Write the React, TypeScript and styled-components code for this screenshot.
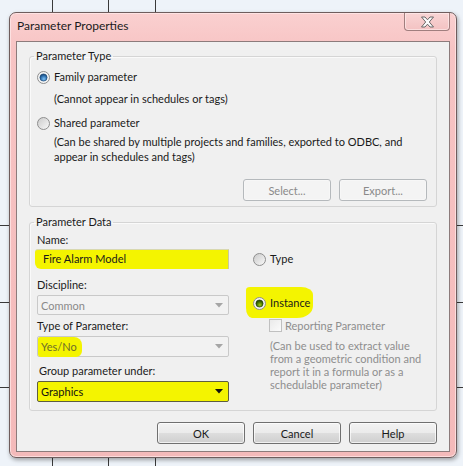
import React from "react";
import styled, { createGlobalStyle } from "styled-components";

const Global = createGlobalStyle`
  html, body { margin: 0; padding: 0; background: #eef3f9; }
  body { font-family: Lato, "Noto Sans", sans-serif; font-size: 11px; color: #1a1a1a; }
  * { box-sizing: border-box; }
`;

const Page = styled.div`
  position: relative;
  width: 463px;
  height: 466px;
  overflow: hidden;
  background: #eef3f9;
  padding: 12px 0 0 9px;
`;

const BgLines = styled.svg`
  position: absolute;
  left: 0;
  top: 0;
`;

const Window = styled.div`
  position: relative;
  width: 448px;
  height: 446px;
  border: 1px solid #6f5d5d;
  border-radius: 7px;
  background: linear-gradient(180deg, #fad0d0 0%, #f7c4c4 8%, #f4baba 100%);
  box-shadow: inset 0 0 0 1px rgba(255, 235, 235, 0.7), 1px 2px 4px rgba(0, 0, 0, 0.35);
  padding: 0 6px 5px 6px;
  display: flex;
  flex-direction: column;
`;

const TitleBar = styled.div`
  height: 28px;
  display: flex;
  justify-content: space-between;
  align-items: flex-start;
`;

const Title = styled.div`
  margin: 6px 0 0 1px;
  font-size: 12px;
  line-height: 14px;
  color: #1b1b1b;
`;

const CloseBtn = styled.div`
  width: 46px;
  height: 18px;
  border: 1px solid #a07e7e;
  border-top: none;
  border-radius: 0 0 4px 4px;
  background: linear-gradient(180deg, #f9d5d5, #f3c2c2);
  box-shadow: inset 0 0 0 1px rgba(255, 240, 240, 0.6);
  display: flex;
  align-items: center;
  justify-content: center;
`;

const Client = styled.div`
  height: 411px;
  border: 1px solid #8c7b7b;
  background: #f0f0f0;
  padding: 7px 12px 0 12px;
  display: flex;
  flex-direction: column;
  white-space: nowrap;
`;

const Group = styled.fieldset<{ $mt?: number; $pb?: number }>`
  margin: ${(p) => p.$mt ?? 0}px 0 0 0;
  padding: 0 0 ${(p) => p.$pb ?? 5}px 0;
  border: 1px solid #d5d5d5;
  border-radius: 3px;
  box-shadow: inset 1px 1px 0 #fafafa;
  min-width: 0;
`;

const Legend = styled.legend`
  margin-left: 4px;
  padding: 0 2px;
  line-height: 14px;
  font-size: 11px;
`;

const RadioRow = styled.label<{ $mt: number; $pl?: number }>`
  display: flex;
  align-items: center;
  gap: 4px;
  height: 16px;
  margin-top: ${(p) => p.$mt}px;
  padding-left: ${(p) => p.$pl ?? 7}px;
  line-height: 16px;
`;

const Note = styled.div<{ $mt: number; $pl?: number; $lh?: number; $gray?: boolean }>`
  margin-top: ${(p) => p.$mt}px;
  padding-left: ${(p) => p.$pl ?? 24}px;
  line-height: ${(p) => p.$lh ?? 14}px;
  color: ${(p) => (p.$gray ? "#8e8e8e" : "#1a1a1a")};
`;

const ButtonRow = styled.div<{ $mt: number; $pr: number }>`
  display: flex;
  justify-content: flex-end;
  gap: 8px;
  margin-top: ${(p) => p.$mt}px;
  padding-right: ${(p) => p.$pr}px;
`;

const Button = styled.button<{ $disabled?: boolean }>`
  width: 88px;
  height: 22px;
  padding: 0;
  font-family: inherit;
  font-size: 11px;
  border-radius: 3px;
  border: 1px solid ${(p) => (p.$disabled ? "#b5b9bc" : "#707070")};
  color: ${(p) => (p.$disabled ? "#8a8a8a" : "#1a1a1a")};
  background: ${(p) =>
    p.$disabled
      ? "#f4f4f4"
      : "linear-gradient(180deg, #f3f3f3 0%, #ebebeb 48%, #dddddd 52%, #cfcfcf 100%)"};
  box-shadow: inset 0 0 0 1px ${(p) => (p.$disabled ? "#f7f7f7" : "rgba(255,255,255,0.7)")};
`;

const DataBody = styled.div`
  display: flex;
`;

const LeftCol = styled.div`
  width: 192px;
  margin-left: 7px;
  display: flex;
  flex-direction: column;
`;

const RightCol = styled.div`
  margin-left: 24px;
  display: flex;
  flex-direction: column;
`;

const FieldLabel = styled.div<{ $mt: number; $ml?: number }>`
  margin-top: ${(p) => p.$mt}px;
  margin-left: ${(p) => p.$ml ?? 0}px;
  line-height: 14px;
  height: 14px;
`;

const TextInput = styled.div`
  margin-top: 2px;
  height: 20px;
  margin-left: -2px;
  padding-left: 8px;
  background: #f4f400;
  border-radius: 3px 0 0 6px;
  border-top: 1px solid #d8d8b0;
  border-right: 1px solid #c8c8a0;
  line-height: 18px;
`;

const Select = styled.div<{ $mt: number; $h: number; $active?: boolean }>`
  margin-top: ${(p) => p.$mt}px;
  height: ${(p) => p.$h}px;
  border: 1px solid ${(p) => (p.$active ? "#5e5e40" : "#c9c9c9")};
  border-radius: 2px;
  background: ${(p) => (p.$active ? "#f4f400" : "#f2f2f2")};
  color: ${(p) => (p.$active ? "#111" : "#8a8a8a")};
  display: flex;
  align-items: center;
  justify-content: space-between;
  padding: 0 5px 0 3px;
`;

const Highlight = styled.span`
  background: #f4f400;
  padding: 3px 5px 3px 3px;
  margin: -3px -5px -3px -3px;
  border-radius: 2px 8px 6px 3px;
  color: #6d6d2a;
  line-height: 14px;
`;

const InstanceMark = styled.div`
  background: #f4f400;
  margin: 20px -3px -7px -7px;
  padding: 8px 3px 7px 7px;
  border-radius: 4px 12px 16px 6px / 3px 8px 12px 10px;
  width: fit-content;
`;

const CheckRow = styled.div`
  display: flex;
  align-items: center;
  gap: 3px;
  margin-top: 8px;
  padding-left: 16px;
  height: 13px;
  color: #8e8e8e;
`;

const CheckBox = styled.span`
  width: 13px;
  height: 13px;
  border: 1px solid #c0c0c0;
  background: linear-gradient(135deg, #eaeaea, #fbfbfb);
`;

function Radio({ checked, dot }: { checked?: boolean; dot?: "blue" | "green" }) {
  const id = `r-${checked ? dot : "off"}`;
  const c =
    dot === "green"
      ? ["#1f3d00", "#3f6e00", "#a0cc10"]
      : ["#123f6e", "#2e6fae", "#7fc2f5"];
  return (
    <svg width="13" height="13" viewBox="0 0 13 13">
      <defs>
        <linearGradient id={`${id}-bg`} x1="0" y1="0" x2="1" y2="1">
          <stop offset="0" stopColor="#c9c9c9" />
          <stop offset="1" stopColor="#fafafa" />
        </linearGradient>
        <radialGradient id={`${id}-dot`} cx="0.55" cy="0.7" r="0.7">
          <stop offset="0" stopColor={c[2]} />
          <stop offset="0.6" stopColor={c[1]} />
          <stop offset="1" stopColor={c[0]} />
        </radialGradient>
      </defs>
      <circle cx="6.5" cy="6.5" r="6" fill={checked ? "#f4f4f4" : `url(#${id}-bg)`} stroke="#8e8e8e" />
      {checked && <circle cx="6.5" cy="6.5" r="3.6" fill={`url(#${id}-dot)`} stroke={c[0]} strokeWidth="0.6" />}
    </svg>
  );
}

function Arrow({ color }: { color: string }) {
  return (
    <svg width="8" height="5" viewBox="0 0 8 5">
      <path d="M0 0 H8 L4 4.5 Z" fill={color} />
    </svg>
  );
}

export default function App() {
  return (
    <>
      <Global />
      <Page>
        <BgLines width="463" height="466">
          {[52, 108, 155].map((x) => (
            <line key={x} x1={x + 0.5} y1="0" x2={x + 0.5} y2="466" stroke="#3a3a3a" strokeWidth="1" />
          ))}
          {[225, 302, 387].map((y) => (
            <line key={y} x1="0" y1={y + 0.5} x2="463" y2={y + 0.5} stroke="#3a3a3a" strokeWidth="1" />
          ))}
        </BgLines>
        <Window>
          <TitleBar>
            <Title>Parameter Properties</Title>
            <CloseBtn>
              <svg width="15" height="12" viewBox="0 0 15 12">
                <path
                  d="M1.5 1 H5 L7.5 3.8 L10 1 H13.5 L9.3 6 L13.5 11 H10 L7.5 8.2 L5 11 H1.5 L5.7 6 Z"
                  fill="#fbfbfb"
                  stroke="#5a5a5a"
                  strokeWidth="0.9"
                  strokeLinejoin="round"
                />
              </svg>
            </CloseBtn>
          </TitleBar>
          <Client>
            <Group>
              <Legend>Parameter Type</Legend>
              <RadioRow $mt={6}>
                <Radio checked dot="blue" />
                Family parameter
              </RadioRow>
              <Note $mt={7}>(Cannot appear in schedules or tags)</Note>
              <RadioRow $mt={9}>
                <Radio />
                Shared parameter
              </RadioRow>
              <Note $mt={3} $lh={15}>
                (Can be shared by multiple projects and families, exported to ODBC, and
                <br />
                appear in schedules and tags)
              </Note>
              <ButtonRow $mt={15} $pr={9}>
                <Button $disabled>Select...</Button>
                <Button $disabled>Export...</Button>
              </ButtonRow>
            </Group>
            <Group $mt={8} $pb={8}>
              <Legend>Parameter Data</Legend>
              <DataBody>
                <LeftCol>
                  <FieldLabel $mt={4}>Name:</FieldLabel>
                  <TextInput>Fire Alarm Model</TextInput>
                  <FieldLabel $mt={9}>Discipline:</FieldLabel>
                  <Select $mt={3} $h={20}>
                    <span>Common</span>
                    <Arrow color="#a6a6a6" />
                  </Select>
                  <FieldLabel $mt={4}>Type of Parameter:</FieldLabel>
                  <Select $mt={3} $h={21}>
                    <Highlight>Yes/No</Highlight>
                    <Arrow color="#a6a6a6" />
                  </Select>
                  <FieldLabel $mt={7} $ml={2}>Group parameter under:</FieldLabel>
                  <Select $mt={3} $h={21} $active>
                    <span>Graphics</span>
                    <Arrow color="#111" />
                  </Select>
                </LeftCol>
                <RightCol>
                  <RadioRow $mt={22} $pl={0}>
                    <Radio />
                    Type
                  </RadioRow>
                  <InstanceMark>
                    <RadioRow $mt={0} $pl={0}>
                      <Radio checked dot="green" />
                      Instance
                    </RadioRow>
                  </InstanceMark>
                  <CheckRow>
                    <CheckBox />
                    Reporting Parameter
                  </CheckRow>
                  <Note $mt={7} $pl={17} $lh={13} $gray>
                    (Can be used to extract value
                    <br />
                    from a geometric condition and
                    <br />
                    report it in a formula or as a
                    <br />
                    schedulable parameter)
                  </Note>
                </RightCol>
              </DataBody>
            </Group>
            <ButtonRow $mt={11} $pr={0}>
              <Button>OK</Button>
              <Button>Cancel</Button>
              <Button>Help</Button>
            </ButtonRow>
          </Client>
        </Window>
      </Page>
    </>
  );
}
